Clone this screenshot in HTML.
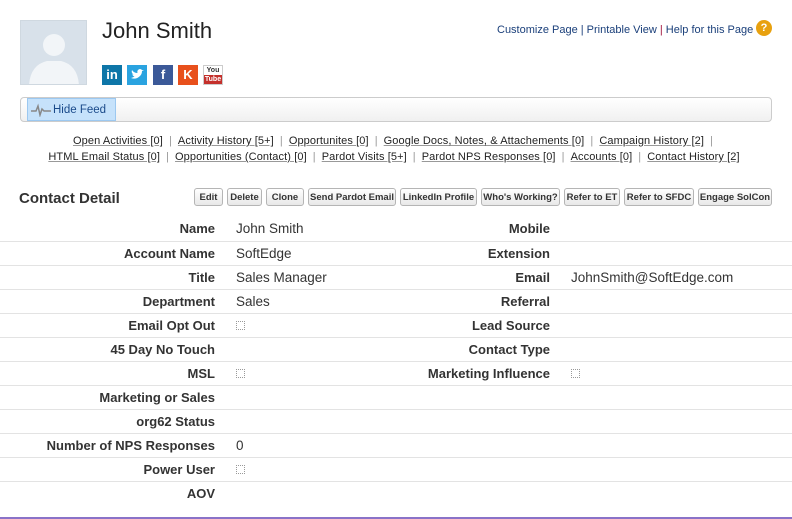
<!DOCTYPE html>
<html><head><style>
*{margin:0;padding:0;box-sizing:border-box}
body{width:792px;height:519px;background:#fff;font-family:"Liberation Sans",sans-serif;position:relative;overflow:hidden;color:#222}
.a{position:absolute;white-space:nowrap}
.ic{position:absolute;top:65px;width:20px;height:20px;color:#fff;font-weight:bold;text-align:center;line-height:20px;font-size:13px}
.links{font-size:11px;letter-spacing:0.1px;color:#222;text-align:center;width:792px;left:0}
.links u{text-decoration:underline;text-decoration-color:#999}
.links span{color:#999;margin:0 6px}
.btn{position:absolute;top:188px;height:18px;border:1px solid #b5b5b5;border-radius:3px;background:linear-gradient(#fff,#e8e8e8);font-size:9.5px;font-weight:bold;line-height:17px;text-align:center;color:#333}
.row{position:absolute;left:0;width:792px;height:24px;border-top:1px solid #e3e3e3}
.l{position:absolute;right:577px;font-weight:bold;font-size:13px;line-height:23px;color:#333}
.v{position:absolute;left:236px;font-size:13.5px;line-height:23px;color:#333}
.l2{position:absolute;right:242px;font-weight:bold;font-size:13px;line-height:23px;color:#333}
.v2{position:absolute;left:571px;font-size:13.5px;line-height:23px;color:#333}
.cb{position:absolute;top:7px;width:9px;height:9px;border:1px dotted #999}
</style></head><body>
<div class="a" style="left:20px;top:20px;width:67px;height:65px;background:#d8e1ea;border:1px solid #cfd8e0;overflow:hidden">
<svg width="67" height="65"><circle cx="33" cy="24" r="11" fill="#f2f5f8"/><path d="M8 65 Q9 44 26 40 L40 40 Q57 44 58 65Z" fill="#f2f5f8"/></svg></div>
<div class="a" style="left:102px;top:18px;font-size:22px;color:#222">John Smith</div>
<div class="ic" style="left:102px;background:#0e76a8">in</div>
<div class="ic" style="left:127px;background:#2aa3e0"><svg width="20" height="20"><path d="M4 13 Q9 15 13 11 Q15 9 15 6 L17 5 L15 5 Q13 3 11 5 Q10 6 10.5 8 Q7 8 5 5 Q4 8 6.5 9.5 L5 9.5 Q6 11 7.5 11.5 Q6 12.5 4 13Z" fill="#fff"/></svg></div>
<div class="ic" style="left:153px;background:#3b5998">f</div>
<div class="ic" style="left:178px;background:#e8501c">K</div>
<div class="ic" style="left:203px;background:#fff;border:1px solid #ccc;font-size:7px;line-height:9px;color:#333">You<div style="background:#c4302b;color:#fff">Tube</div></div>
<div class="a" style="left:497px;top:24px;font-size:11px;color:#1a3f7a">Customize Page <span>|</span> Printable View <span style="color:#a0143c">|</span> Help for this Page</div>
<div class="a" style="left:756px;top:20px;width:16px;height:16px;border-radius:50%;background:#e8a10f;color:#fff;font-weight:bold;font-size:11px;text-align:center;line-height:16px">?</div>
<div class="a" style="left:20px;top:97px;width:752px;height:25px;border:1px solid #ccc;border-radius:4px;background:linear-gradient(#fff,#f0f0f0)"></div>
<div class="a" style="left:27px;top:98px;width:89px;height:23px;background:#c6e2fb;border:1px solid #9cc8f0"></div>
<svg class="a" style="left:30px;top:103px" width="22" height="14"><path d="M1 8 H6 L8 3 L10 12 L12 6 L14 8 H21" stroke="#888" stroke-width="1.5" fill="none"/></svg>
<div class="a" style="left:53px;top:104px;font-size:11.5px;color:#1a4a8a">Hide Feed</div>
<div class="a links" style="top:135px"><u>Open Activities [0]</u><span>|</span><u>Activity History [5+]</u><span>|</span><u>Opportunites [0]</u><span>|</span><u>Google Docs, Notes, &amp; Attachements [0]</u><span>|</span><u>Campaign History [2]</u><span>|</span></div>
<div class="a links" style="top:151px;left:-2px"><u>HTML Email Status [0]</u><span>|</span><u>Opportunities (Contact) [0]</u><span>|</span><u>Pardot Visits [5+]</u><span>|</span><u>Pardot NPS Responses [0]</u><span>|</span><u>Accounts [0]</u><span>|</span><u>Contact History [2]</u></div>
<div class="a" style="left:19px;top:190px;font-size:15px;font-weight:bold;color:#333">Contact Detail</div>
<div class="btn" style="left:194px;width:29px">Edit</div>
<div class="btn" style="left:227px;width:35px">Delete</div>
<div class="btn" style="left:266px;width:38px">Clone</div>
<div class="btn" style="left:308px;width:88px">Send Pardot Email</div>
<div class="btn" style="left:400px;width:77px">LinkedIn Profile</div>
<div class="btn" style="left:481px;width:79px">Who's Working?</div>
<div class="btn" style="left:564px;width:56px">Refer to ET</div>
<div class="btn" style="left:624px;width:70px">Refer to SFDC</div>
<div class="btn" style="left:698px;width:74px">Engage SolCon</div>

<div class="row" style="top:217px;border-top:none"><div class="l">Name</div><div class="v">John Smith</div><div class="l2">Mobile</div></div>
<div class="row" style="top:241px"><div class="l">Account Name</div><div class="v">SoftEdge</div><div class="l2">Extension</div></div>
<div class="row" style="top:265px"><div class="l">Title</div><div class="v">Sales Manager</div><div class="l2">Email</div><div class="v2">JohnSmith@SoftEdge.com</div></div>
<div class="row" style="top:289px"><div class="l">Department</div><div class="v">Sales</div><div class="l2">Referral</div></div>
<div class="row" style="top:313px"><div class="l">Email Opt Out</div><div class="cb" style="left:236px"></div><div class="l2">Lead Source</div></div>
<div class="row" style="top:337px"><div class="l">45 Day No Touch</div><div class="l2">Contact Type</div></div>
<div class="row" style="top:361px"><div class="l">MSL</div><div class="cb" style="left:236px"></div><div class="l2">Marketing Influence</div><div class="cb" style="left:571px"></div></div>
<div class="row" style="top:385px"><div class="l">Marketing or Sales</div></div>
<div class="row" style="top:409px"><div class="l">org62 Status</div></div>
<div class="row" style="top:433px"><div class="l">Number of NPS Responses</div><div class="v">0</div></div>
<div class="row" style="top:457px"><div class="l">Power User</div><div class="cb" style="left:236px"></div></div>
<div class="row" style="top:481px"><div class="l">AOV</div></div>
<div class="a" style="left:0;top:517px;width:792px;height:2px;background:#8a72c8"></div>
</body></html>
